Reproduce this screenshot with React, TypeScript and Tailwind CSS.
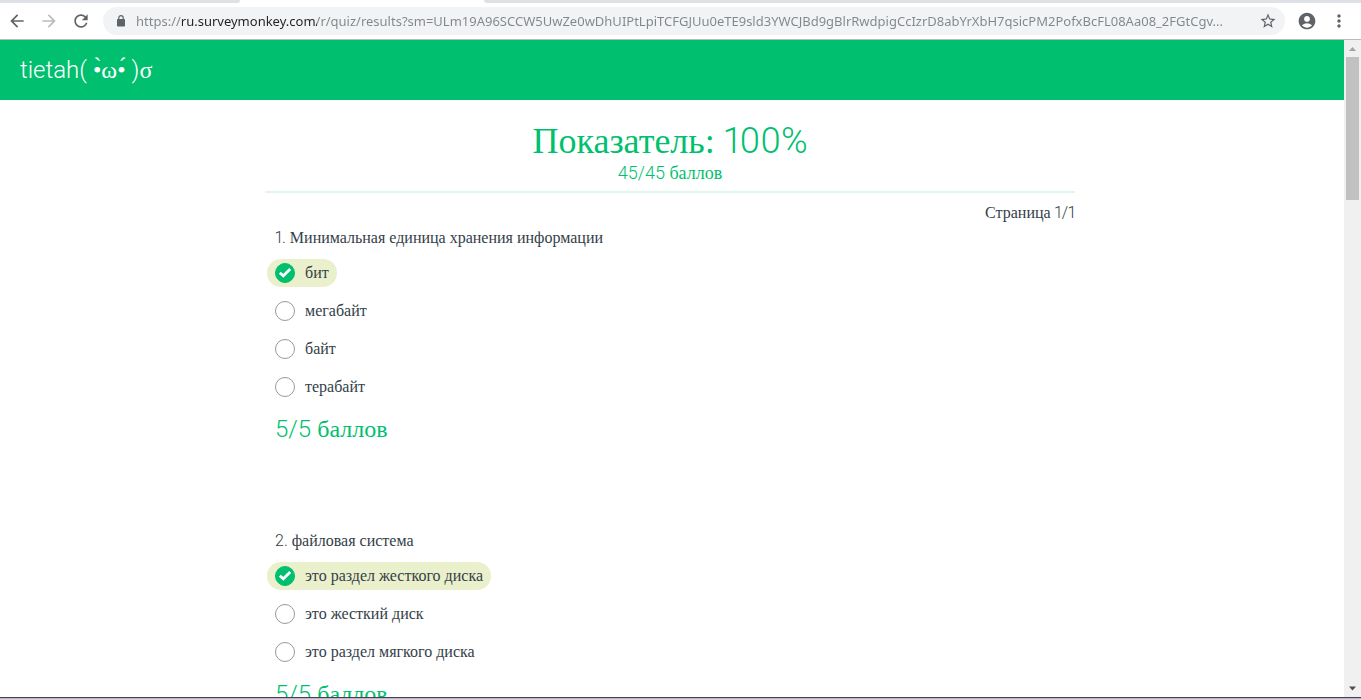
import { useState } from "react";
import type { ReactNode } from "react";
import { MdAccountCircle, MdArrowBack, MdArrowForward, MdMoreVert, MdRefresh, MdStarBorder } from "react-icons/md";

type Question = { number: number; title: string; options: string[]; score: string };

const questions: Question[] = [
  {
    number: 1,
    title: "Минимальная единица хранения информации",
    options: ["бит", "мегабайт", "байт", "терабайт"],
    score: "5/5",
  },
  {
    number: 2,
    title: "файловая система",
    options: ["это раздел жесткого диска", "это жесткий диск", "это раздел мягкого диска"],
    score: "5/5",
  },
];

const address =
  "https://ru.surveymonkey.com/r/quiz/results?sm=ULm19A96SCCW5UwZe0wDhUIPtLpiTCFGJUu0eTE9sld3YWCJBd9gBlrRwdpigCcIzrD8abYrXbH7qsicPM2PofxBcFL08Aa08_2FGtCgv...";

function Figures({ children }: { children: ReactNode }) {
  return <span className="font-['Roboto',sans-serif] font-light proportional-nums">{children}</span>;
}

function LockIcon() {
  return (
    <svg viewBox="0 0 14 14" className="mr-2 size-3.5 shrink-0" aria-hidden="true">
      <rect x="3" y="5" width="8" height="7.5" rx="0.8" fill="currentColor" />
      <path d="M4.8 5.5V3.8a2.2 2.2 0 0 1 4.4 0v1.7" fill="none" stroke="currentColor" strokeWidth="1.2" />
    </svg>
  );
}

function BrowserBar() {
  const [url, setUrl] = useState(address);
  return (
    <header className="shrink-0 border-b border-[#b8babc] bg-white">
      <div className="flex h-[3px] justify-between bg-white">
        <div className="w-60 rounded-br-lg bg-[#dee1e6]" />
        <div className="ml-[244px] flex-1 rounded-bl-lg bg-[#dee1e6]" />
      </div>
      <div className="flex h-9 items-center pr-3 pl-[7px] text-[#5f6368]">
        <button aria-label="Назад" className="mr-3"><MdArrowBack size={20} /></button>
        <button aria-label="Вперёд" className="mr-3 text-[#babcbe]"><MdArrowForward size={20} /></button>
        <button aria-label="Обновить" className="mr-3"><MdRefresh size={20} /></button>
        <div className="flex h-7 min-w-0 flex-1 items-center rounded-full bg-[#f1f3f4] pr-2 pl-[11px]">
          <LockIcon />
          <input
            aria-label="Адрес"
            value={url}
            onChange={(e) => setUrl(e.target.value)}
            className="h-7 min-w-0 flex-1 bg-[linear-gradient(90deg,#80868b_46px,#202124_46px,#202124_181px,#80868b_181px)] bg-clip-text font-['Noto_Sans',sans-serif] text-[13px] text-transparent caret-black outline-none"
          />
          <button aria-label="Добавить в закладки" className="ml-3"><MdStarBorder size={18} /></button>
        </div>
        <button aria-label="Профиль" className="ml-3"><MdAccountCircle size={20} /></button>
        <button aria-label="Меню" className="ml-3"><MdMoreVert size={20} /></button>
      </div>
    </header>
  );
}

function Option({ name, label, correct }: { name: string; label: string; correct: boolean }) {
  return (
    <label className={`flex h-7 w-fit items-center gap-2.5 rounded-full px-2 ${correct ? "bg-[#eaf0cb]" : ""}`}>
      <span className="grid size-5 place-items-center">
        <input
          type="radio"
          name={name}
          defaultChecked={correct}
          className="col-start-1 row-start-1 size-5 appearance-none rounded-full border border-[#999] bg-white checked:border-[#00bf6f] checked:bg-[#00bf6f]"
        />
        {correct && (
          <svg viewBox="0 0 20 20" className="pointer-events-none col-start-1 row-start-1 size-5" fill="none" aria-hidden="true">
            <path d="M4.8 9.8 8.3 12.8 15.2 6" stroke="white" strokeWidth="2.8" />
          </svg>
        )}
      </span>
      <span>{label}</span>
    </label>
  );
}

function QuestionBlock({ question }: { question: Question }) {
  return (
    <fieldset className="mb-[81px] px-0.5">
      <legend className="mb-2 px-2 leading-[26px]">
        <Figures>{question.number}.</Figures> {question.title}
      </legend>
      <div className="flex flex-col gap-2.5">
        {question.options.map((label, i) => (
          <Option key={label} name={`question-${question.number}`} label={label} correct={i === 0} />
        ))}
      </div>
      <p className="mt-2.5 px-2 text-2xl leading-9 text-[#00bf6f]">
        <Figures>{question.score}</Figures> баллов
      </p>
    </fieldset>
  );
}

function Scrollbar() {
  return (
    <div className="flex w-[17px] shrink-0 flex-col items-center bg-[#f0f0f0]" aria-hidden="true">
      <svg className="size-[17px] shrink-0" viewBox="0 0 17 17"><path d="M5 11 8.5 7 12 11Z" fill="#a3a3a3" /></svg>
      <div className="h-[143px] w-[13px] bg-[#c1c1c1]" />
      <svg className="mt-auto size-[17px] shrink-0" viewBox="0 0 17 17"><path d="M5 6.5H12L8.5 10.5Z" fill="#505050" /></svg>
    </div>
  );
}

export default function App() {
  return (
    <div className="flex h-screen flex-col overflow-hidden bg-white">
      <BrowserBar />
      <div className="flex min-h-0 flex-1">
        <div className="min-w-0 flex-1 overflow-hidden font-['Liberation_Serif',serif] text-base text-[#333e48]">
          <div className="flex h-[60px] items-center bg-[#00bf6f] px-5">
            <h1 className="text-2xl text-white">
              <Figures>tietah(</Figures> •̀ω•́ <Figures>)</Figures>σ
            </h1>
          </div>
          <div className="pt-5 pr-1">
            <main className="mx-auto max-w-[810px]">
              <div className="border-b-2 border-[#e0f5ee] pb-2 text-center text-[#00bf6f]">
                <h2 className="text-4xl leading-[43px]">Показатель: <Figures>100%</Figures></h2>
                <p className="text-lg leading-5">
                  <Figures>45/45</Figures> баллов
                </p>
              </div>
              <p className="pt-2 text-right leading-6">
                Страница <Figures>1/1</Figures>
              </p>
              {questions.map((q) => (
                <QuestionBlock key={q.number} question={q} />
              ))}
            </main>
          </div>
        </div>
        <Scrollbar />
      </div>
      <div className="h-0.5 shrink-0 border-t border-[#3b4655] bg-[#a9bdd6]" />
    </div>
  );
}
